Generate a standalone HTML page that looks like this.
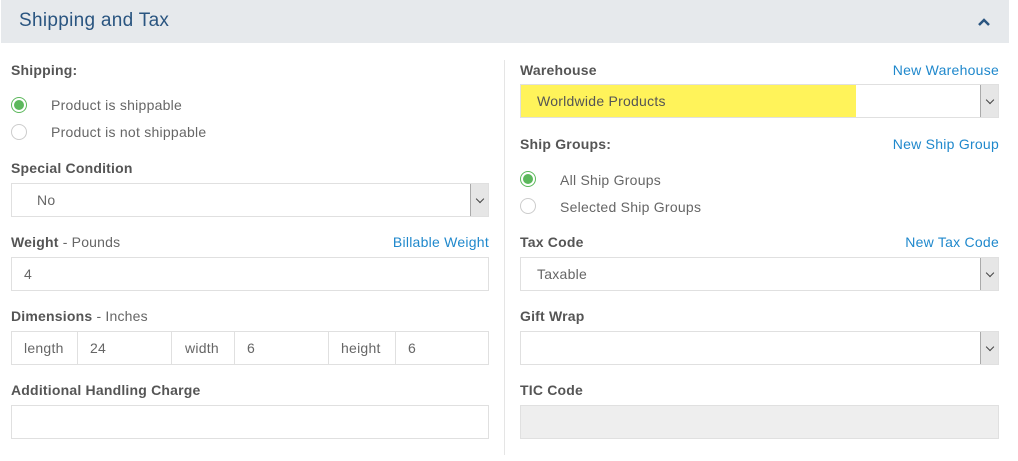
<!DOCTYPE html>
<html><head><style>
*{box-sizing:border-box;margin:0;padding:0}
body{width:1018px;height:461px;background:#fff;font-family:"Liberation Sans",sans-serif;font-size:14px;color:#666;position:relative;overflow:hidden;letter-spacing:0.25px}
.a{position:absolute;white-space:nowrap}
.hdr{left:1px;top:0;width:1008px;height:43px;background:#e6e9ec}
.lbl{font-weight:bold;color:#555;font-size:14px;letter-spacing:0.2px}
.lnk{color:#1f88cc}
.box{position:absolute;border:1px solid #e0e0e0;background:#fff;padding-left:25px;line-height:32px;height:34px;color:#666}
.sel:after{content:"";position:absolute;right:0;top:0;width:17px;height:32px;background:#e6e6e6;border-left:1px solid #aaa}
.chev{position:absolute;right:5px;top:12px;width:6px;height:6px;border-right:1px solid #444;border-bottom:1px solid #444;transform:rotate(45deg);z-index:2}
.rad{position:absolute;width:16px;height:16px;border-radius:50%;border:1px solid #ccc;background:#fff}
.rad.on{border-color:#5cb85c}
.rad.on:after{content:"";position:absolute;left:2px;top:2px;width:10px;height:10px;border-radius:50%;background:#5cb85c}
.cell{position:absolute;top:331px;height:34px;border:1px solid #e0e0e0;line-height:32px;color:#666}
</style></head><body>
<div class="a hdr"></div>
<div class="a" style="left:19px;top:10px;font-size:19px;color:#2a5580;letter-spacing:0.3px">Shipping and Tax</div>
<svg class="a" style="left:977px;top:17px" width="14" height="10"><path d="M2 8 L7 3 L12 8" stroke="#2a5580" stroke-width="2.5" fill="none"/></svg>
<div class="a" style="left:504px;top:60px;width:1px;height:395px;background:#e5e5e5"></div>

<div class="a lbl" style="left:11px;top:62px">Shipping:</div>
<div class="rad on" style="left:11px;top:97px"></div>
<div class="a" style="left:51px;top:97px">Product is shippable</div>
<div class="rad" style="left:11px;top:124px"></div>
<div class="a" style="left:51px;top:124px">Product is not shippable</div>
<div class="a lbl" style="left:11px;top:160px">Special Condition</div>
<div class="box sel" style="left:11px;top:183px;width:478px">No<span class="chev"></span></div>
<div class="a lbl" style="left:11px;top:234px">Weight <span style="font-weight:normal;color:#666">- Pounds</span></div>
<div class="a lnk" style="right:529px;top:234px">Billable Weight</div>
<div class="box" style="left:11px;top:257px;width:478px;padding-left:12px">4</div>
<div class="a lbl" style="left:11px;top:308px">Dimensions <span style="font-weight:normal;color:#666">- Inches</span></div>
<div class="cell" style="left:11px;width:67px;padding-left:12px">length</div>
<div class="cell" style="left:77px;width:95px;padding-left:12px">24</div>
<div class="cell" style="left:171px;width:64px;padding-left:13px">width</div>
<div class="cell" style="left:234px;width:95px;padding-left:12px">6</div>
<div class="cell" style="left:328px;width:68px;padding-left:12px">height</div>
<div class="cell" style="left:395px;width:94px;padding-left:12px">6</div>
<div class="a lbl" style="left:11px;top:382px">Additional Handling Charge</div>
<div class="box" style="left:11px;top:405px;width:478px"></div>

<div class="a lbl" style="left:520px;top:62px">Warehouse</div>
<div class="a lnk" style="right:19px;top:62px">New Warehouse</div>
<div class="box sel" style="left:520px;top:84px;width:479px;padding-left:0"><span style="display:block;width:335px;height:32px;background:#fff35a;padding-left:16px;color:#555">Worldwide Products</span><span class="chev"></span></div>
<div class="a lbl" style="left:520px;top:136px">Ship Groups:</div>
<div class="a lnk" style="right:19px;top:136px">New Ship Group</div>
<div class="rad on" style="left:520px;top:171px"></div>
<div class="a" style="left:560px;top:172px">All Ship Groups</div>
<div class="rad" style="left:520px;top:198px"></div>
<div class="a" style="left:560px;top:199px">Selected Ship Groups</div>
<div class="a lbl" style="left:520px;top:234px">Tax Code</div>
<div class="a lnk" style="right:19px;top:234px">New Tax Code</div>
<div class="box sel" style="left:520px;top:257px;width:479px;padding-left:16px">Taxable<span class="chev"></span></div>
<div class="a lbl" style="left:520px;top:308px">Gift Wrap</div>
<div class="box sel" style="left:520px;top:331px;width:479px"><span class="chev"></span></div>
<div class="a lbl" style="left:520px;top:382px">TIC Code</div>
<div class="box" style="left:520px;top:405px;width:479px;background:#eee"></div>
</body></html>
